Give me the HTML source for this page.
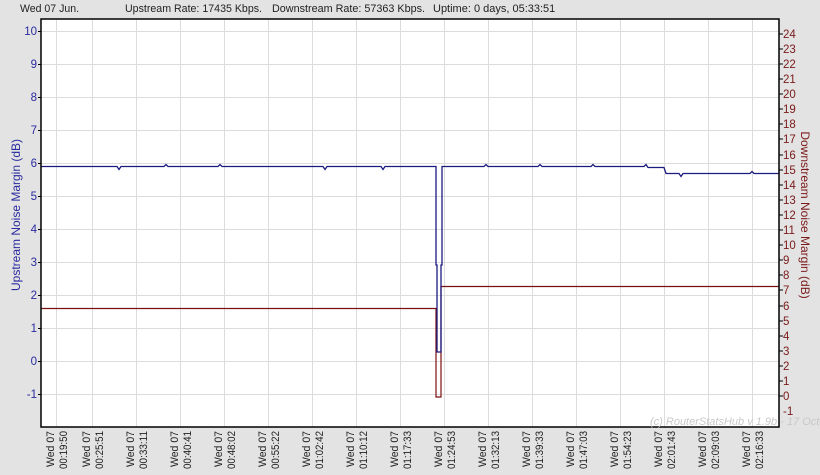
<!DOCTYPE html>
<html><head><style>
html,body{margin:0;padding:0;background:#e3e3e3;}
svg{display:block;font-family:"Liberation Sans",sans-serif;}
</style></head><body>
<svg width="820" height="475" xmlns="http://www.w3.org/2000/svg">
<rect width="820" height="475" fill="#e3e3e3"/>
<g font-size="11" fill="#222">
<text x="20" y="12" textLength="59" lengthAdjust="spacingAndGlyphs">Wed 07 Jun.</text>
<text x="125" y="12" textLength="137" lengthAdjust="spacingAndGlyphs">Upstream Rate: 17435 Kbps.</text>
<text x="272" y="12" textLength="153" lengthAdjust="spacingAndGlyphs">Downstream Rate: 57363 Kbps.</text>
<text x="433" y="12">Uptime: 0 days, 05:33:51</text>
</g>
<rect x="41" y="19" width="738" height="408" fill="#fff"/>
<g stroke="#dcdcdc" stroke-width="1">
<path d="M56.5 19V427M92.5 19V427M136.5 19V427M180.5 19V427M224.5 19V427M268.5 19V427M312.5 19V427M356.5 19V427M400.5 19V427M444.5 19V427M488.5 19V427M532.5 19V427M576.5 19V427M620.5 19V427M664.5 19V427M708.5 19V427M752.5 19V427"/>
<path d="M41 31.5H779M41 64.5H779M41 97.5H779M41 130.5H779M41 163.5H779M41 196.5H779M41 229.5H779M41 262.5H779M41 295.5H779M41 328.5H779M41 361.5H779M41 394.5H779"/>
</g>
<path d="M41 308.5H436V397H441V286.5H779" fill="none" stroke="#7a1010" stroke-width="1.2"/>
<path d="M41 166.5H117l2 3 2-3H164l2-2 2 2H218l2-2 2 2H323l2 3 2-3H381l2 3 2-3H436V265H437V352H441V265H442V166.5H484l2-2 2 2H538l2-2 2 2H591l2-2 2 2H644l2-2 2 3H664l2 6H679l2 3 2-3H750l2-2 2 2H779" fill="none" stroke="#1a1a80" stroke-width="1.3"/>
<path d="M41 19H779V427H41Z" fill="none" stroke="#000" stroke-width="1.5"/>
<g stroke="#000" stroke-width="1">
<path d="M38 31.5H41M38 64.5H41M38 97.5H41M38 130.5H41M38 163.5H41M38 196.5H41M38 229.5H41M38 262.5H41M38 295.5H41M38 328.5H41M38 361.5H41M38 394.5H41"/>
<path d="M779 34H783M779 49H783M779 64H783M779 79H783M779 94H783M779 109H783M779 124H783M779 139H783M779 155H783M779 170H783M779 185H783M779 200H783M779 215H783M779 230H783M779 245H783M779 260H783M779 275H783M779 290H783M779 306H783M779 321H783M779 336H783M779 351H783M779 366H783M779 381H783M779 396H783"/>
</g>
<g font-size="11.5" fill="#2a2aa0" text-anchor="end">
<text x="37" y="35">10</text><text x="37" y="68">9</text><text x="37" y="101">8</text><text x="37" y="134">7</text><text x="37" y="167">6</text><text x="37" y="200">5</text><text x="37" y="233">4</text><text x="37" y="266">3</text><text x="37" y="299">2</text><text x="37" y="332">1</text><text x="37" y="365">0</text><text x="37" y="398">-1</text>
</g>
<g font-size="11.5" fill="#7a1a1a">
<text x="783" y="38">24</text><text x="783" y="53">23</text><text x="783" y="68">22</text><text x="783" y="83">21</text><text x="783" y="98">20</text><text x="783" y="113">19</text><text x="783" y="128">18</text><text x="783" y="143">17</text><text x="783" y="159">16</text><text x="783" y="174">15</text><text x="783" y="189">14</text><text x="783" y="204">13</text><text x="783" y="219">12</text><text x="783" y="234">11</text><text x="783" y="249">10</text><text x="783" y="264">9</text><text x="783" y="279">8</text><text x="783" y="294">7</text><text x="783" y="310">6</text><text x="783" y="325">5</text><text x="783" y="340">4</text><text x="783" y="355">3</text><text x="783" y="370">2</text><text x="783" y="385">1</text><text x="783" y="400">0</text><text x="783" y="415">-1</text>
</g>
<text transform="translate(20,215) rotate(-90)" font-size="12" fill="#2a2aa0" text-anchor="middle">Upstream Noise Margin (dB)</text>
<text transform="translate(801,215) rotate(90)" font-size="12" fill="#7a1a1a" text-anchor="middle">Downstream Noise Margin (dB)</text>
<text x="650" y="425" font-size="11" font-style="italic" fill="#c8c8c8">(c) RouterStatsHub v 1.9b - 17 October 2</text>
<g font-size="11" fill="#222" text-anchor="end">
<g transform="translate(56,431) rotate(-90)"><text x="0" y="-2" textLength="36" lengthAdjust="spacingAndGlyphs">Wed 07</text><text x="0" y="11" textLength="38" lengthAdjust="spacingAndGlyphs">00:19:50</text></g>
<g transform="translate(92,431) rotate(-90)"><text x="0" y="-2" textLength="36" lengthAdjust="spacingAndGlyphs">Wed 07</text><text x="0" y="11" textLength="38" lengthAdjust="spacingAndGlyphs">00:25:51</text></g>
<g transform="translate(136,431) rotate(-90)"><text x="0" y="-2" textLength="36" lengthAdjust="spacingAndGlyphs">Wed 07</text><text x="0" y="11" textLength="38" lengthAdjust="spacingAndGlyphs">00:33:11</text></g>
<g transform="translate(180,431) rotate(-90)"><text x="0" y="-2" textLength="36" lengthAdjust="spacingAndGlyphs">Wed 07</text><text x="0" y="11" textLength="38" lengthAdjust="spacingAndGlyphs">00:40:41</text></g>
<g transform="translate(224,431) rotate(-90)"><text x="0" y="-2" textLength="36" lengthAdjust="spacingAndGlyphs">Wed 07</text><text x="0" y="11" textLength="38" lengthAdjust="spacingAndGlyphs">00:48:02</text></g>
<g transform="translate(268,431) rotate(-90)"><text x="0" y="-2" textLength="36" lengthAdjust="spacingAndGlyphs">Wed 07</text><text x="0" y="11" textLength="38" lengthAdjust="spacingAndGlyphs">00:55:22</text></g>
<g transform="translate(312,431) rotate(-90)"><text x="0" y="-2" textLength="36" lengthAdjust="spacingAndGlyphs">Wed 07</text><text x="0" y="11" textLength="38" lengthAdjust="spacingAndGlyphs">01:02:42</text></g>
<g transform="translate(356,431) rotate(-90)"><text x="0" y="-2" textLength="36" lengthAdjust="spacingAndGlyphs">Wed 07</text><text x="0" y="11" textLength="38" lengthAdjust="spacingAndGlyphs">01:10:12</text></g>
<g transform="translate(400,431) rotate(-90)"><text x="0" y="-2" textLength="36" lengthAdjust="spacingAndGlyphs">Wed 07</text><text x="0" y="11" textLength="38" lengthAdjust="spacingAndGlyphs">01:17:33</text></g>
<g transform="translate(444,431) rotate(-90)"><text x="0" y="-2" textLength="36" lengthAdjust="spacingAndGlyphs">Wed 07</text><text x="0" y="11" textLength="38" lengthAdjust="spacingAndGlyphs">01:24:53</text></g>
<g transform="translate(488,431) rotate(-90)"><text x="0" y="-2" textLength="36" lengthAdjust="spacingAndGlyphs">Wed 07</text><text x="0" y="11" textLength="38" lengthAdjust="spacingAndGlyphs">01:32:13</text></g>
<g transform="translate(532,431) rotate(-90)"><text x="0" y="-2" textLength="36" lengthAdjust="spacingAndGlyphs">Wed 07</text><text x="0" y="11" textLength="38" lengthAdjust="spacingAndGlyphs">01:39:33</text></g>
<g transform="translate(576,431) rotate(-90)"><text x="0" y="-2" textLength="36" lengthAdjust="spacingAndGlyphs">Wed 07</text><text x="0" y="11" textLength="38" lengthAdjust="spacingAndGlyphs">01:47:03</text></g>
<g transform="translate(620,431) rotate(-90)"><text x="0" y="-2" textLength="36" lengthAdjust="spacingAndGlyphs">Wed 07</text><text x="0" y="11" textLength="38" lengthAdjust="spacingAndGlyphs">01:54:23</text></g>
<g transform="translate(664,431) rotate(-90)"><text x="0" y="-2" textLength="36" lengthAdjust="spacingAndGlyphs">Wed 07</text><text x="0" y="11" textLength="38" lengthAdjust="spacingAndGlyphs">02:01:43</text></g>
<g transform="translate(708,431) rotate(-90)"><text x="0" y="-2" textLength="36" lengthAdjust="spacingAndGlyphs">Wed 07</text><text x="0" y="11" textLength="38" lengthAdjust="spacingAndGlyphs">02:09:03</text></g>
<g transform="translate(752,431) rotate(-90)"><text x="0" y="-2" textLength="36" lengthAdjust="spacingAndGlyphs">Wed 07</text><text x="0" y="11" textLength="38" lengthAdjust="spacingAndGlyphs">02:16:33</text></g>
</g>
</svg>
</body></html>
